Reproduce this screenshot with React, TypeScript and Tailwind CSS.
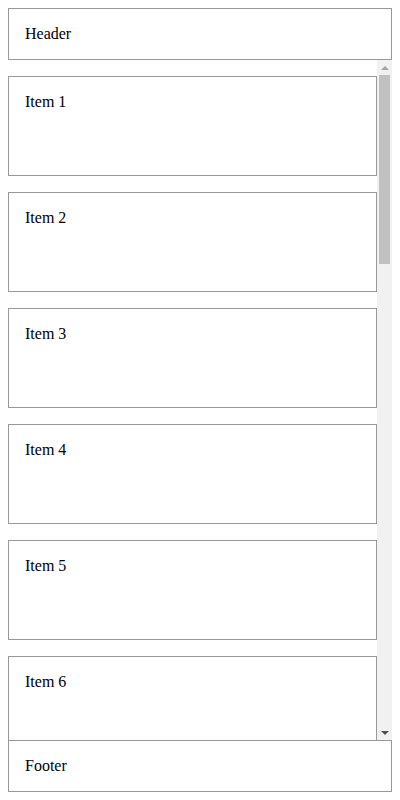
// only the items that show in the scroll area; the rest sit below the fold
const items = Array.from({ length: 6 }, (_, i) => `Item ${i + 1}`);

function Arrow({ down, color }: { down?: boolean; color: string }) {
  return (
    <svg width="8" height="4" viewBox="0 0 8 4" className="block">
      <polygon points={down ? "0,0 8,0 4,4" : "0,4 8,4 4,0"} fill={color} />
    </svg>
  );
}

function Scrollbar() {
  return (
    <div className="flex w-[15px] shrink-0 flex-col bg-[#f1f1f1]">
      <div className="flex h-[15px] items-center justify-center">
        <Arrow color="#a3a3a3" />
      </div>
      <div className="flex-1 px-[2px]">
        <div className="h-[189px] bg-[#c1c1c1]" />
      </div>
      <div className="flex h-[15px] items-center justify-center">
        <Arrow down color="#505050" />
      </div>
    </div>
  );
}

export default function App() {
  return (
    <div className="flex h-screen flex-col bg-white p-2 text-base text-black [font-family:'Liberation_Serif',serif]">
      <div className="h-[52px] shrink-0 border border-[#999] px-4 py-4 leading-[18px]">Header</div>
      <div className="flex min-h-0 flex-1">
        <div className="min-w-0 flex-1 overflow-hidden">
          {items.map((label) => (
            <div key={label} className="mt-4 h-[100px] border border-[#999] px-4 py-4 leading-[18px]">
              {label}
            </div>
          ))}
        </div>
        <Scrollbar />
      </div>
      <div className="h-[52px] shrink-0 border border-[#999] px-4 py-4 leading-[18px]">Footer</div>
    </div>
  );
}
